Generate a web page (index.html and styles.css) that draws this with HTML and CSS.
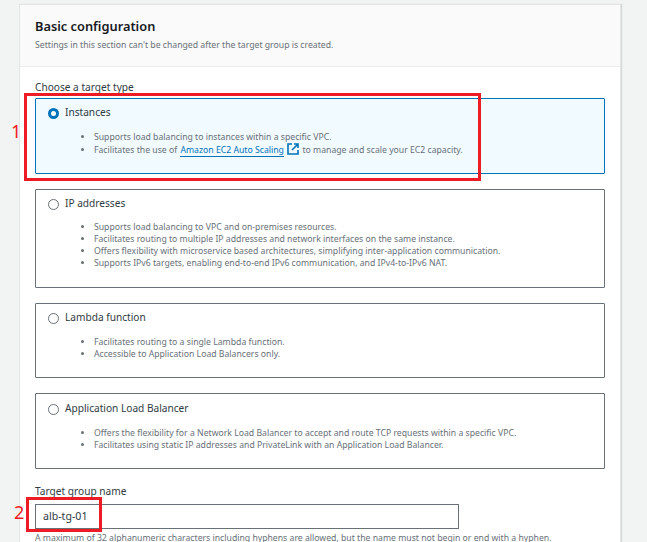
FILE: index.html
```html
<!DOCTYPE html>
<html lang="en">
<head>
    <meta charset="UTF-8">
    <meta name="viewport" content="width=device-width, initial-scale=1.0">
    <title>Basic configuration</title>
    <link rel="stylesheet" href="styles.css">
</head>
<body>
    <div class="panel">
        <div class="panel-header">
            <h2>Basic configuration</h2>
            <p>Settings in this section can't be changed after the target group is created.</p>
        </div>
        <div class="panel-body">
            <div class="field-label">Choose a target type</div>
            <div class="cards">
                <div class="card selected">
                    <div class="card-title"><span class="radio checked"></span>Instances</div>
                    <ul>
                        <li>Supports load balancing to instances within a specific VPC.</li>
                        <li>Facilitates the use of <a href="#">Amazon EC2 Auto Scaling</a>
                            <svg class="ext-icon" width="12" height="12" viewBox="0 0 12 12" fill="none" stroke="#0073bb" stroke-width="1.6">
                                <path d="M5 1H1v10h10V7"/>
                                <path d="M7 1h4v4M11 1L5 7"/>
                            </svg>
                            to manage and scale your EC2 capacity.</li>
                    </ul>
                </div>
                <div class="card tall">
                    <div class="card-title"><span class="radio"></span>IP addresses</div>
                    <ul>
                        <li>Supports load balancing to VPC and on-premises resources.</li>
                        <li>Facilitates routing to multiple IP addresses and network interfaces on the same instance.</li>
                        <li>Offers flexibility with microservice based architectures, simplifying inter-application communication.</li>
                        <li>Supports IPv6 targets, enabling end-to-end IPv6 communication, and IPv4-to-IPv6 NAT.</li>
                    </ul>
                </div>
                <div class="card short">
                    <div class="card-title"><span class="radio"></span>Lambda function</div>
                    <ul>
                        <li>Facilitates routing to a single Lambda function.</li>
                        <li>Accessible to Application Load Balancers only.</li>
                    </ul>
                </div>
                <div class="card last">
                    <div class="card-title"><span class="radio"></span>Application Load Balancer</div>
                    <ul>
                        <li>Offers the flexibility for a Network Load Balancer to accept and route TCP requests within a specific VPC.</li>
                        <li>Facilitates using static IP addresses and PrivateLink with an Application Load Balancer.</li>
                    </ul>
                </div>
            </div>
            <div class="field-label name-label">Target group name</div>
            <div class="text-input">alb-tg-01</div>
            <div class="hint">A maximum of 32 alphanumeric characters including hyphens are allowed, but the name must not begin or end with a hyphen.</div>
        </div>
    </div>

    <!-- annotations on top of the screenshot -->
    <div class="mark mark-one"></div>
    <div class="mark-num num-one">1</div>
    <div class="mark mark-two"></div>
    <div class="mark-num num-two">2</div>
</body>
</html>
```

FILE: styles.css
```css
html, body {
    height: 542px;
    overflow: hidden;
}
body {
    background-color: #f2f3f3;
    color: #16191f;
    font-family: "Noto Sans", "Open Sans", sans-serif;
    font-size: 10px;
    margin: 0;
    padding: 4px 26px 0 19px;
    position: relative;
}
.panel {
    background-color: #ffffff;
    border: 1px solid #e3e4e4;
    border-bottom: none;
    box-shadow: 1px 0 1px #d5dbdb;
}
.panel-header {
    background-color: #fafafa;
    border-bottom: 1px solid #eaeded;
    box-sizing: border-box;
    height: 62px;
    padding: 11px 15px 0;
}
h2 {
    font-size: 12.8px;
    font-weight: 600;
    line-height: 20px;
    margin: 0;
}
.panel-header p {
    color: #687078;
    font-size: 8.68px;
    line-height: 14px;
    margin: 2px 0 0;
}
.panel-body {
    padding: 13px 15px 0;
}
.field-label {
    color: #303a42;
    font-size: 10.15px;
    line-height: 14px;
    margin-bottom: 4px;
}
.cards {
    display: flex;
    flex-direction: column;
    gap: 15px;
}
.card {
    border: 1px solid #687078;
    border-radius: 1px;
    box-sizing: border-box;
    height: 76px;
    padding: 5px 12px;
}
.card.tall {
    height: 99px;
}
.card.tall ul {
    margin-top: 10px;
}
.card.short {
    height: 75px;
}
.card.last {
    padding-top: 6px;
}
.card.selected {
    background-color: #f1faff;
    border-color: #0073bb;
}
.card-title {
    align-items: center;
    color: #303a42;
    display: flex;
    font-size: 10.15px;
    gap: 6px;
    height: 16px;
}
.radio {
    background-color: #fff;
    border: 1px solid #687078;
    border-radius: 50%;
    box-sizing: border-box;
    height: 11px;
    margin-top: 2px;
    width: 11px;
}
.radio.checked {
    border: 3.5px solid #0073bb;
}
ul {
    color: #687078;
    font-size: 8.68px;
    line-height: 12px;
    margin: 10.5px 0 0;
    padding-left: 46px;
}
a {
    border-bottom: 1px solid #0073bb;
    color: #0073bb;
    margin-left: 1px;
    text-decoration: none;
}
.ext-icon {
    margin: 0 1px;
    vertical-align: -2px;
}
.name-label {
    margin-bottom: 6px;
    margin-top: 15px;
}
.text-input {
    background-color: #fff;
    border: 1px solid #687078;
    box-sizing: border-box;
    color: #303a42;
    font-size: 10.6px;
    height: 25px;
    line-height: 23px;
    padding-left: 7px;
    width: 424px;
}
.hint {
    color: #687078;
    font-size: 8.68px;
    line-height: 12px;
    margin-top: 3px;
    white-space: nowrap;
}
.mark {
    border: 3px solid #ed1c24;
    box-sizing: border-box;
    position: absolute;
}
.mark-one {
    height: 88px;
    left: 24px;
    top: 93px;
    width: 457px;
}
.mark-two {
    height: 35px;
    left: 26px;
    top: 497px;
    width: 76px;
}
.mark-num {
    color: #ed1c24;
    font-size: 18px;
    line-height: 20px;
    position: absolute;
}
.num-one {
    left: 11px;
    top: 121px;
}
.num-two {
    left: 14px;
    top: 502px;
}
```
